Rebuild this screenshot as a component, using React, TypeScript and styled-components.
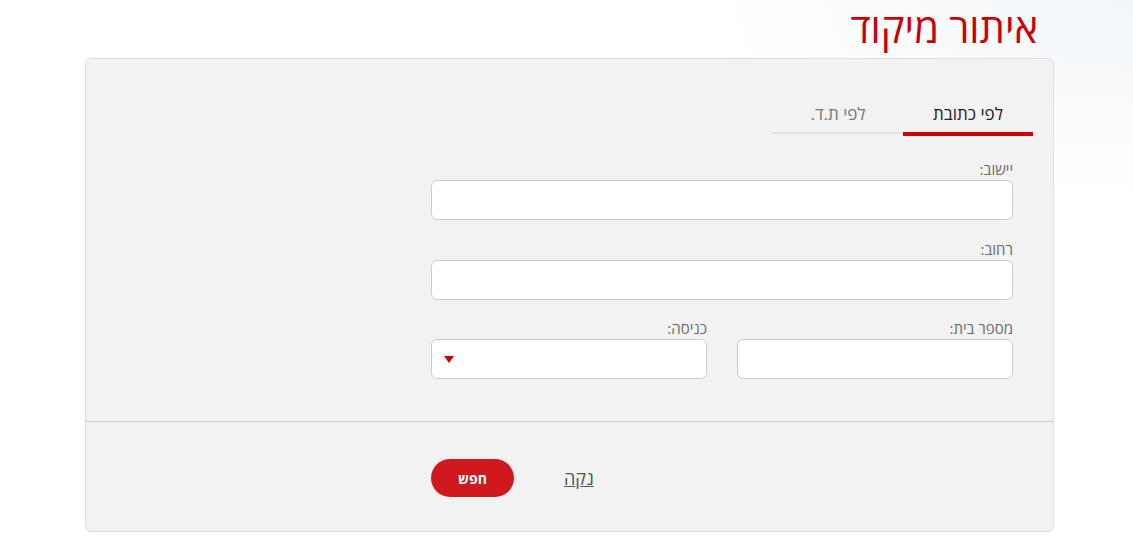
import { useState } from 'react';
import styled, { createGlobalStyle, css } from 'styled-components';

const GlobalStyle = createGlobalStyle`
  html,
  body {
    min-height: 100%;
  }

  body {
    margin: 0;
    background:
      radial-gradient(ellipse 420px 200px at 100% 0%, #f2f6f9 0%, rgba(255, 255, 255, 0) 100%) no-repeat,
      #ffffff;
    font-family: 'Open Sans', 'Liberation Sans', 'DejaVu Sans', sans-serif;
    direction: rtl;
  }
`;

const tabs = ['לפי כתובת', 'לפי ת.ד.'];

const App = () => {
  const [activeTab, setActiveTab] = useState(0);

  return (
    <>
      <GlobalStyle />
      <Page>
        <Title>איתור מיקוד</Title>
        <Card>
          <Body>
            <Tabs>
              {tabs.map((tab, idx) => (
                <Tab key={tab} active={activeTab === idx} onClick={() => setActiveTab(idx)}>
                  {tab}
                </Tab>
              ))}
            </Tabs>
            <Form>
              <Field>
                <Label>יישוב:</Label>
                <Input type="text" />
              </Field>
              <Field>
                <Label>רחוב:</Label>
                <Input type="text" />
              </Field>
              <Row>
                <Field>
                  <Label>מספר בית:</Label>
                  <Input type="text" />
                </Field>
                <Field>
                  <Label>כניסה:</Label>
                  <SelectBox>
                    <Arrow />
                  </SelectBox>
                </Field>
              </Row>
            </Form>
          </Body>
          <Footer>
            <ClearLink href="#">נקה</ClearLink>
            <SearchButton type="button">חפש</SearchButton>
          </Footer>
        </Card>
      </Page>
    </>
  );
};

const Page = styled.div`
  width: 969px;
  margin-right: 79px;
  padding-top: 4px;
`;

const Title = styled.h1`
  margin: 0 0 7px 0;
  padding-right: 16px;
  height: 47px;
  line-height: 47px;
  font-size: 40px;
  font-weight: 400;
  color: #cc0000;
`;

const Card = styled.section`
  background-color: #f2f2f2;
  border: 1px solid #dcdcdc;
  border-radius: 6px;
  height: 474px;
  box-sizing: border-box;
`;

const Body = styled.div`
  padding: 41px 20px 42px 20px;
  border-bottom: 1px solid #cfcfcf;
`;

const Tabs = styled.div`
  display: flex;
  align-items: flex-start;
`;

const Tab = styled.div<{ active: boolean }>`
  width: 130px;
  height: 32px;
  text-align: center;
  font-size: 17px;
  line-height: 28px;
  cursor: pointer;

  ${({ active }) =>
    active
      ? css`
          color: #222;
          border-bottom: 4px solid #cc0000;
        `
      : css`
          color: #777;
          border-bottom: 2px solid #e2e2e2;
        `}
`;

const Form = styled.div`
  width: 582px;
  margin-right: 20px;
  margin-top: 24px;
  display: flex;
  flex-direction: column;
  gap: 19.5px;
`;

const Row = styled.div`
  display: flex;
  gap: 30px;

  & > * {
    flex: 1;
  }
`;

const Field = styled.div`
  display: flex;
  flex-direction: column;
`;

const Label = styled.label`
  font-size: 15px;
  line-height: 18px;
  color: #6b6b6b;
  margin-bottom: 2px;
`;

const Input = styled.input`
  height: 40px;
  box-sizing: border-box;
  border: 1px solid #cccccc;
  border-radius: 6px;
  background: #ffffff;
  outline: none;
`;

const SelectBox = styled.div`
  height: 40px;
  box-sizing: border-box;
  border: 1px solid #cccccc;
  border-radius: 6px;
  background: #ffffff;
  display: flex;
  align-items: center;
  justify-content: flex-end;
  padding-left: 12px;
`;

const Arrow = styled.span`
  width: 0;
  height: 0;
  border-left: 5px solid transparent;
  border-right: 5px solid transparent;
  border-top: 7px solid #cc0000;
`;

const Footer = styled.div`
  width: 582px;
  margin-right: 40px;
  padding-top: 37px;
  display: flex;
  align-items: center;
  justify-content: flex-end;
  gap: 50px;
`;

const ClearLink = styled.a`
  font-size: 18px;
  color: #555;
  text-decoration: underline;
`;

const SearchButton = styled.button`
  width: 83px;
  height: 38px;
  border: none;
  border-radius: 19px;
  background-color: #d0191f;
  color: #ffffff;
  font-family: inherit;
  font-size: 14px;
  font-weight: 700;
  cursor: pointer;
`;

export default App;
